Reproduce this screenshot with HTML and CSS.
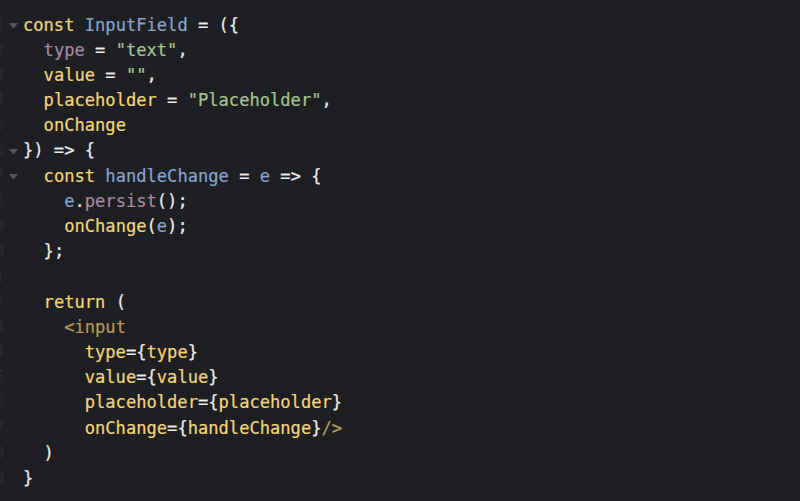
FILE: index.html
```html
<!DOCTYPE html>
<html>
<head>
<meta charset="utf-8">
<link rel="stylesheet" href="styles.css">
</head>
<body>
<div class="editor">
  <div class="line"><span class="num">1</span><span class="fold"><svg width="9" height="6" viewBox="0 0 9 6"><path d="M0 0H9L4.5 5.5Z" fill="#55575b"/></svg></span><span class="code"><span class="y">const</span> <span class="b">InputField</span> <span class="w">= ({</span></span></div>
  <div class="line"><span class="num">2</span><span class="fold"></span><span class="code">  <span class="m">type</span> <span class="w">=</span> <span class="g">"text"</span><span class="w">,</span></span></div>
  <div class="line"><span class="num">3</span><span class="fold"></span><span class="code">  <span class="y">value</span> <span class="w">=</span> <span class="g">""</span><span class="w">,</span></span></div>
  <div class="line"><span class="num">4</span><span class="fold"></span><span class="code">  <span class="y">placeholder</span> <span class="w">=</span> <span class="g">"Placeholder"</span><span class="w">,</span></span></div>
  <div class="line"><span class="num">5</span><span class="fold"></span><span class="code">  <span class="y">onChange</span></span></div>
  <div class="line"><span class="num">6</span><span class="fold"><svg width="9" height="6" viewBox="0 0 9 6"><path d="M0 0H9L4.5 5.5Z" fill="#55575b"/></svg></span><span class="code"><span class="w">}) =&gt; {</span></span></div>
  <div class="line"><span class="num">7</span><span class="fold"><svg width="9" height="6" viewBox="0 0 9 6"><path d="M0 0H9L4.5 5.5Z" fill="#55575b"/></svg></span><span class="code">  <span class="y">const</span> <span class="b">handleChange</span> <span class="w">=</span> <span class="b">e</span> <span class="w">=&gt; {</span></span></div>
  <div class="line"><span class="num">8</span><span class="fold"></span><span class="code">    <span class="b">e</span><span class="w">.</span><span class="m">persist</span><span class="w">();</span></span></div>
  <div class="line"><span class="num">9</span><span class="fold"></span><span class="code">    <span class="y">onChange</span><span class="w">(</span><span class="b">e</span><span class="w">);</span></span></div>
  <div class="line"><span class="num">0</span><span class="fold"></span><span class="code">  <span class="w">};</span></span></div>
  <div class="line"><span class="num">1</span><span class="fold"></span><span class="code"> </span></div>
  <div class="line"><span class="num">2</span><span class="fold"></span><span class="code">  <span class="y">return</span> <span class="w">(</span></span></div>
  <div class="line"><span class="num">3</span><span class="fold"></span><span class="code">    <span class="t">&lt;input</span></span></div>
  <div class="line"><span class="num">4</span><span class="fold"></span><span class="code">      <span class="y">type</span><span class="w">={</span><span class="y">type</span><span class="w">}</span></span></div>
  <div class="line"><span class="num">5</span><span class="fold"></span><span class="code">      <span class="y">value</span><span class="w">={</span><span class="y">value</span><span class="w">}</span></span></div>
  <div class="line"><span class="num">6</span><span class="fold"></span><span class="code">      <span class="y">placeholder</span><span class="w">={</span><span class="y">placeholder</span><span class="w">}</span></span></div>
  <div class="line"><span class="num">7</span><span class="fold"></span><span class="code">      <span class="y">onChange</span><span class="w">={</span><span class="y">handleChange</span><span class="w">}</span><span class="t">/&gt;</span></span></div>
  <div class="line"><span class="num">8</span><span class="fold"></span><span class="code">  <span class="w">)</span></span></div>
  <div class="line"><span class="num">9</span><span class="fold"></span><span class="code"><span class="w">}</span></span></div>
</div>
</body>
</html>
```

FILE: styles.css
```css
html, body {
  margin: 0;
  padding: 0;
  background: #1e1f22;
  height: 100%;
  overflow: hidden;
}
.editor {
  padding-top: 12.5px;
  font-family: "DejaVu Sans Mono", monospace;
  font-size: 17.1px;
  line-height: 25.2px;
  color: #e8e8e8;
  -webkit-text-stroke: 0.2px;
}
.line {
  display: flex;
  align-items: center;
  height: 25.2px;
}
.num {
  width: 4px;
  overflow: hidden;
  direction: rtl;
  color: #2b2c30;
  font-size: 15px;
  flex: none;
  -webkit-text-stroke: 0;
}
.fold {
  width: 19px;
  flex: none;
  display: flex;
  justify-content: center;
  align-items: center;
}
.fold svg {
  margin-top: 1px;
}
.code {
  white-space: pre;
}
.y { color: #f2d67b; }
.b { color: #86a5ce; }
.m { color: #a689a3; }
.g { color: #a6c493; }
.w { color: #ececec; }
.t { color: #b69b5d; }
```
